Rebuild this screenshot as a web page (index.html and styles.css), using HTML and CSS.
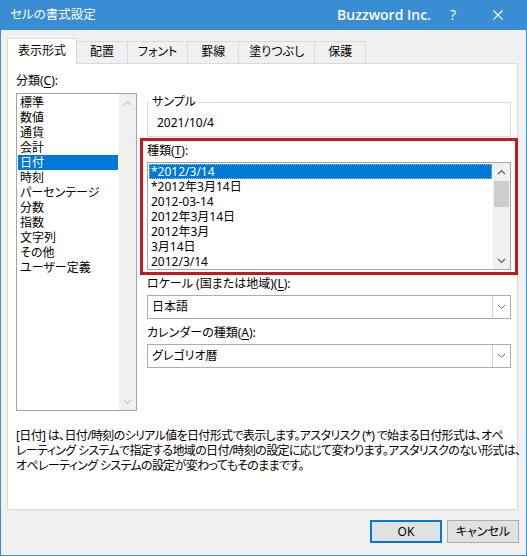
FILE: index.html
```html
<!DOCTYPE html>
<html lang="ja">
<head>
<meta charset="utf-8">
<title>セルの書式設定</title>
<link rel="stylesheet" href="styles.css">
</head>
<body>
<div class="window">
  <div class="titlebar">
    <span class="title">セルの書式設定</span>
    <span class="brand">Buzzword Inc.</span>
    <span class="help">?</span>
    <span class="close"><svg width="10" height="10" viewBox="0 0 10 10"><path d="M0.5 0.5L9.5 9.5M9.5 0.5L0.5 9.5" stroke="#fff" stroke-width="1.1" fill="none"/></svg></span>
  </div>
  <div class="client">
    <div class="tabs">
      <div class="tab active">表示形式</div>
      <div class="tab">配置</div>
      <div class="tab">フォント</div>
      <div class="tab">罫線</div>
      <div class="tab">塗りつぶし</div>
      <div class="tab">保護</div>
    </div>
    <div class="panel">
      <div class="columns">
        <div class="left">
          <div class="label">分類(<u>C</u>):</div>
          <div class="listbox cat">
            <ul class="items">
              <li>標準</li>
              <li>数値</li>
              <li>通貨</li>
              <li>会計</li>
              <li class="sel">日付</li>
              <li>時刻</li>
              <li>パーセンテージ</li>
              <li>分数</li>
              <li>指数</li>
              <li>文字列</li>
              <li>その他</li>
              <li>ユーザー定義</li>
            </ul>
            <div class="vscroll disabled">
              <svg class="arr" width="9" height="6" viewBox="0 0 9 6"><path d="M1 5L4.5 1.5L8 5" stroke="currentColor" stroke-width="1.2" fill="none"/></svg>
              <div class="track"></div>
              <svg class="arr" width="9" height="6" viewBox="0 0 9 6"><path d="M1 1L4.5 4.5L8 1" stroke="currentColor" stroke-width="1.2" fill="none"/></svg>
            </div>
          </div>
        </div>
        <div class="right">
          <fieldset class="sample">
            <legend>サンプル</legend>
            <div class="sample-value">2021/10/4</div>
          </fieldset>
          <div class="label gap-top">種類(<u>T</u>):</div>
          <div class="listbox types">
            <ul class="items">
              <li class="sel focus">*2012/3/14</li>
              <li>*2012年3月14日</li>
              <li>2012-03-14</li>
              <li>2012年3月14日</li>
              <li>2012年3月</li>
              <li>3月14日</li>
              <li>2012/3/14</li>
            </ul>
            <div class="vscroll">
              <svg class="arr" width="9" height="6" viewBox="0 0 9 6"><path d="M1 5L4.5 1.5L8 5" stroke="currentColor" stroke-width="1.2" fill="none"/></svg>
              <div class="track"><div class="thumb"></div></div>
              <svg class="arr" width="9" height="6" viewBox="0 0 9 6"><path d="M1 1L4.5 4.5L8 1" stroke="currentColor" stroke-width="1.2" fill="none"/></svg>
            </div>
          </div>
          <div class="label gap-top">ロケール (国または地域)(<u>L</u>):</div>
          <div class="combo">
            <span class="combo-text">日本語</span>
            <span class="combo-btn"><svg width="9" height="6" viewBox="0 0 9 6"><path d="M1 1L4.5 4.5L8 1" stroke="currentColor" stroke-width="1" fill="none"/></svg></span>
          </div>
          <div class="label gap-top">カレンダーの種類(<u>A</u>):</div>
          <div class="combo">
            <span class="combo-text">グレゴリオ暦</span>
            <span class="combo-btn"><svg width="9" height="6" viewBox="0 0 9 6"><path d="M1 1L4.5 4.5L8 1" stroke="currentColor" stroke-width="1" fill="none"/></svg></span>
          </div>
        </div>
      </div>
      <p class="desc">[日付] は、日付/時刻のシリアル値を日付形式で表示します。アスタリスク (*) で始まる日付形式は、オペ<br>レーティング システムで指定する地域の日付/時刻の設定に応じて変わります。アスタリスクのない形式は、<br>オペレーティング システムの設定が変わってもそのままです。</p>
      <div class="highlight"></div>
    </div>
    <div class="buttons">
      <button class="btn default">OK</button>
      <button class="btn">キャンセル</button>
    </div>
  </div>
</div>
</body>
</html>
```
FILE: styles.css
```css
* { box-sizing: border-box; }
html, body { margin: 0; padding: 0; }
body {
  background: #f0f0f0;
  font-family: "Noto Sans", "Noto Sans CJK JP", sans-serif;
  font-size: 12px;
  line-height: 16px;
  color: #000;
  font-feature-settings: "palt";
}
.window {
  width: 527px;
  height: 556px;
  border: 1px solid #3f8fcf;
  border-top: none;
  background: #f0f0f0;
  display: flex;
  flex-direction: column;
}
.titlebar {
  height: 30px;
  margin: 0 -1px;
  background: #3a8dd3;
  color: #fff;
  display: flex;
  align-items: center;
  padding-left: 10px;
}
.title { font-size: 12.5px; flex: 1; }
.brand {
  font-family: "Open Sans", "Noto Sans", sans-serif;
  font-weight: 600;
  font-size: 14px;
  margin-right: 19px;
}
.help { font-family: "Open Sans", sans-serif; font-size: 14px; margin-right: 37px; }
.close { display: flex; margin-right: 24px; }

.client { flex: 1; display: flex; flex-direction: column; }
.tabs {
  display: flex;
  align-items: flex-end;
  margin-top: 8px;
  padding-left: 6px;
}
.tab {
  height: 22px;
  padding: 0 10px;
  min-width: 52px;
  text-align: center;
  border: 1px solid #d9d9d9;
  border-bottom: none;
  margin-left: -1px;
  background: #f0f0f0;
  line-height: 20px;
}
.tab.active {
  margin-left: 0;
  height: 26px;
  margin-bottom: -1px;
  background: #fff;
  position: relative;
  z-index: 1;
  line-height: 24px;
  padding: 0 10px;
}
.panel {
  position: relative;
  height: 447px;
  margin: 0 8px 0 6px;
  background: #fff;
  border: 1px solid #d9d9d9;
  padding: 9px 6px 0 8px;
}
.columns { display: flex; gap: 10px; }
.left { width: 121px; }
.right { flex: 1; margin-top: 21px; }
.label { line-height: 16px; margin-bottom: 3px; }
.left .label { margin-bottom: 4px; }
.gap-top { margin-top: 6px; }
u { text-decoration-thickness: 1px; text-underline-offset: 2px; }

.listbox {
  border: 1px solid #a5a5a5;
  display: flex;
  background: #fff;
}
.items {
  list-style: none;
  margin: 0;
  padding: 1px;
  flex: 1;
  line-height: 15px;
}
.items li { padding-left: 2px; height: 15px; white-space: nowrap; }
.items li.sel { background: #0078d7; color: #fff; }
.items li.focus { outline: 1px dotted #9cc8f0; outline-offset: -1px; }
.cat { height: 318px; }
.cat .items { padding-top: 1px; }
.types { height: 108px; }

.vscroll {
  width: 17px;
  background: #f0f0f0;
  display: flex;
  flex-direction: column;
  align-items: center;
  color: #606060;
}
.vscroll.disabled { color: #c5c5c5; }
.vscroll .arr { margin: 6px 0 5px; flex: none; }
.vscroll .track { flex: 1; width: 100%; }
.thumb { width: 15px; margin: 1px auto 0; height: 26px; background: #cdcdcd; }

.sample {
  margin: 0;
  min-width: 0;
  border: 1px solid #dcdcdc;
  padding: 5px 9px 5px 9px;
}
.sample legend {
  padding: 0 2px;
  margin-left: -7px;
  line-height: 16px;
}
.sample-value { line-height: 16px; }

.combo {
  height: 24px;
  border: 1px solid #adadad;
  background: #fff;
  display: flex;
}
.combo-text { flex: 1; padding-left: 4px; line-height: 22px; }
.combo-btn {
  width: 18px;
  border-left: 1px solid #d4d4d4;
  display: flex;
  align-items: center;
  justify-content: center;
  color: #707070;
}

.desc {
  margin: 17px 0 0;
  line-height: 15px;
  white-space: nowrap;
  letter-spacing: -0.65px;
}
.highlight {
  position: absolute;
  left: 132px;
  top: 74px;
  width: 378px;
  height: 137px;
  border: 3px solid #c8171e;
  pointer-events: none;
}

.buttons {
  display: flex;
  justify-content: flex-end;
  gap: 5px;
  margin-top: 10px;
  padding-right: 7px;
}
.btn {
  font: inherit;
  font-feature-settings: "palt";
  width: 72px;
  height: 23px;
  padding: 0;
  background: #e1e1e1;
  border: 1px solid #adadad;
  color: #000;
}
.btn.default { border: 2px solid #0078d7; }
```
